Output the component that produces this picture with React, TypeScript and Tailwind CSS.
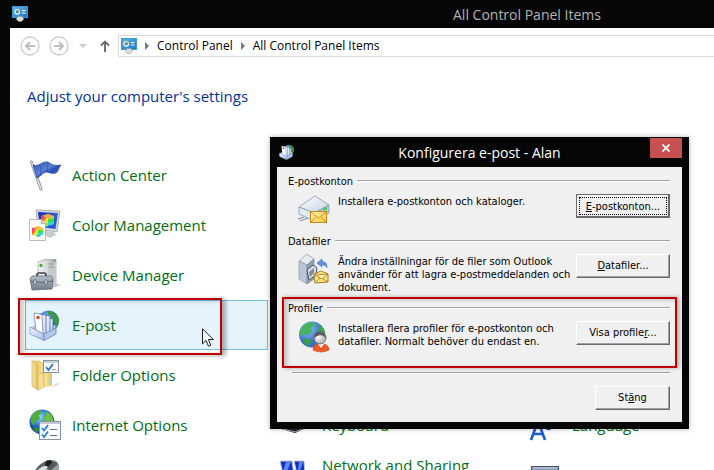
import type { ReactNode } from "react";

function MonitorIcon() {
  return (
    <svg className="h-4 w-4 shrink-0" viewBox="0 0 16 16" aria-hidden="true">
      <defs>
        <linearGradient id="mon" x1="0" y1="0" x2="1" y2="1">
          <stop offset="0" stopColor="#63b4ea" />
          <stop offset="1" stopColor="#1c78c0" />
        </linearGradient>
      </defs>
      <rect x="0.5" y="0.5" width="15" height="11" fill="url(#mon)" stroke="#3d97d3" />
      <circle cx="5.3" cy="5.8" r="2.3" fill="#2f8bd0" stroke="#fff" strokeWidth="1.1" />
      <path d="M5.5 5.6V3.2A2.5 2.5 0 0 1 7.9 5.6Z" fill="#f5a21d" />
      <path d="M10 4.5h3.5M10 7h3.5" stroke="#fff" strokeWidth="1.1" />
      <path d="M6 10.500h4l1.8 2.500-2.300 2.500h-3l-2.300-2.500Z" fill="#d9dcde" stroke="#8b9093" strokeWidth=".5" />
    </svg>
  );
}

function FlagIcon() {
  return (
    <svg viewBox="0 0 32 32" className="h-8 w-8" aria-hidden="true">
      <defs>
        <linearGradient id="flag" x1="0" y1="0" x2="1" y2="1">
          <stop offset="0" stopColor="#2c4fae" />
          <stop offset=".45" stopColor="#5b83d8" />
          <stop offset=".6" stopColor="#2a4fb5" />
          <stop offset="1" stopColor="#5c8ae0" />
        </linearGradient>
      </defs>
      <path d="M2.5 3 12 30" stroke="#8d9296" strokeWidth="3" strokeLinecap="round" />
      <path d="M2.5 3 12 30" stroke="#e8eaec" strokeWidth="1.2" strokeLinecap="round" />
      <path d="M4 6c6 2 9-4 15-3 4 3 7 4 13 3-3 3-2 6-5 8-4 1-5 0-9-1-4 0-6 4-10 6Z" fill="url(#flag)" stroke="#223f94" strokeWidth=".7" />
      <path d="M19 4c-1 4 1 5-2 9M11 6c2 5 0 7 1 11" stroke="#1d3a92" strokeWidth=".8" fill="none" opacity=".6" />
    </svg>
  );
}

function Cube({ x, y, s }: { x: number; y: number; s: number }) {
  return (
    <g transform={`translate(${x} ${y}) scale(${s})`}>
      <path d="M0 2 7 0l6 2-6 2Z" fill="#ffb13d" />
      <path d="M0 2 7 4v9L0 10Z" fill="url(#rain1)" />
      <path d="M13 2 7 4v9l6-3Z" fill="url(#rain2)" />
    </g>
  );
}

function ColorIcon() {
  return (
    <svg viewBox="0 0 32 32" className="h-8 w-8" aria-hidden="true">
      <defs>
        <linearGradient id="rain1" x1="0" y1="0" x2="1" y2="1">
          <stop offset="0" stopColor="#ff2bd0" />
          <stop offset=".3" stopColor="#ff4b36" />
          <stop offset=".6" stopColor="#fff23a" />
          <stop offset="1" stopColor="#38e64a" />
        </linearGradient>
        <linearGradient id="rain2" x1="0" y1="0" x2="0" y2="1">
          <stop offset="0" stopColor="#ffe339" />
          <stop offset=".4" stopColor="#35df3b" />
          <stop offset=".75" stopColor="#28dff0" />
          <stop offset="1" stopColor="#2a59ef" />
        </linearGradient>
        <linearGradient id="scr" x1="0" y1="0" x2="1" y2="0">
          <stop offset="0" stopColor="#1b2fae" />
          <stop offset="1" stopColor="#2f62dc" />
        </linearGradient>
      </defs>
      <path d="m7 1 24 1-3 21-19-3Z" fill="#d7dade" stroke="#9a9fa5" strokeWidth=".8" />
      <path d="m9 3 20 1-2.5 16L11 18Z" fill="url(#scr)" />
      <path d="m17 22 8 1 2 3-6 3-6-3Z" fill="#c9cdd1" />
      <Cube x={12} y={5} s={1} />
      <path d="M.5 10.500h12l4 4v17H.5Z" fill="#fafafa" stroke="#a8a8a8" strokeWidth=".8" />
      <path d="M12.500 10.500v4h4" fill="#ddd" stroke="#a8a8a8" strokeWidth=".8" />
      <Cube x={3} y={17} s={0.85} />
    </svg>
  );
}

function DeviceIcon() {
  return (
    <svg viewBox="0 0 32 32" className="h-8 w-8" aria-hidden="true">
      <defs>
        <linearGradient id="tower" x1="0" x2="1">
          <stop offset="0" stopColor="#f4f5f6" />
          <stop offset=".6" stopColor="#cfd3d6" />
          <stop offset="1" stopColor="#8f9599" />
        </linearGradient>
        <linearGradient id="tool" x1="0" y1="0" x2="0" y2="1">
          <stop offset="0" stopColor="#b4bfca" />
          <stop offset="1" stopColor="#6e7b88" />
        </linearGradient>
      </defs>
      <path d="m24 24 8 2-8 3Z" fill="#ccc" />
      <path d="M9 3 16 .5h11V26H9Z" fill="url(#tower)" stroke="#9ba0a4" strokeWidth=".7" />
      <path d="M19 3h8v23h-8Z" fill="#c6cacd" />
      <path d="M20 5h5M20 8h5" stroke="#8c9296" />
      <circle cx="12" cy="6.500" r="1.700" fill="#40b52d" />
      <path d="M8 18v-2q0-2 2-2h5q2 0 2 2v2" fill="none" stroke="#3f464d" strokeWidth="1.700" />
      <path d="m1 20 2-3h19l2 3-1 10-20 1Z" fill="url(#tool)" stroke="#535e68" strokeWidth=".7" />
      <path d="M1 22q11 3 23 0" fill="none" stroke="#5c6771" />
      <rect x="5" y="21" width="2" height="4" fill="#e9ecee" stroke="#3f464d" strokeWidth=".5" />
      <rect x="16" y="21" width="2" height="4" fill="#e9ecee" stroke="#3f464d" strokeWidth=".5" />
    </svg>
  );
}

function MailIcon({ small = false }: { small?: boolean }) {
  return (
    <svg viewBox="0 0 32 32" className={small ? "h-4 w-4 shrink-0" : "h-8 w-8"} aria-hidden="true">
      <defs>
        <radialGradient id="mailGlobe" cx=".4" cy=".3">
          <stop offset="0" stopColor="#7ec6f5" />
          <stop offset="1" stopColor="#1c56b5" />
        </radialGradient>
        <linearGradient id="tray" x1="0" y1="0" x2="1" y2="1">
          <stop offset="0" stopColor="#f4f8ff" />
          <stop offset="1" stopColor="#a3b9e2" />
        </linearGradient>
        <linearGradient id="letter" x1="0" y1="0" x2="1" y2="1">
          <stop offset="0" stopColor="#fff" />
          <stop offset="1" stopColor="#c4d4f0" />
        </linearGradient>
      </defs>
      <circle cx="19.500" cy="12" r="10.500" fill="url(#mailGlobe)" />
      <path d="M19 2q9 0 11 9-1 7-5 10l1-7-4-3 2-4-5-2Z" fill="#3d9a3c" />
      <path d="m1 19 5-3v-2l20 2 1 5-12 7Z" fill="#b9caea" />
      <path d="m19 9 5 1v13l-5 2Z" fill="url(#letter)" stroke="#4a68a6" strokeWidth=".8" />
      <path d="m15 6 6 1v18l-6-2Z" fill="url(#letter)" stroke="#4a68a6" strokeWidth=".8" />
      <path d="m11 5 6 1v20l-6-3Z" fill="url(#letter)" stroke="#4a68a6" strokeWidth=".8" />
      <path d="m5 4 8 1.500 1 19-7-3Z" fill="#fff" stroke="#6d85b8" strokeWidth=".8" />
      <rect x="7.500" y="7" width="3" height="3" fill="#ef3b20" />
      <path d="m1 18 14 7v6.500L1 25Z" fill="url(#tray)" stroke="#7d95c6" strokeWidth=".8" />
      <path d="m15 25 12-6v6l-12 6.500Z" fill="#b4c7ea" stroke="#6a84ba" strokeWidth=".8" />
    </svg>
  );
}

function FolderIcon() {
  return (
    <svg viewBox="0 0 32 32" className="h-8 w-8" aria-hidden="true">
      <defs>
        <linearGradient id="fold" x1="0" x2="1">
          <stop offset="0" stopColor="#f9e8a4" />
          <stop offset="1" stopColor="#e2bd57" />
        </linearGradient>
      </defs>
      <path d="m22 27 9-4-2 3-10 3Z" fill="#ddd" />
      <path d="M3 2h8l1 2h8v23H9Z" fill="#f0d785" stroke="#d3b35c" strokeWidth=".7" />
      <path d="m3 2 6 3v26l-6-4Z" fill="url(#fold)" stroke="#cfae54" strokeWidth=".7" />
      <path d="m9 15 5-1 1 14-6 3Z" fill="#f7df91" stroke="#cfae54" strokeWidth=".6" />
      <path d="m16 16 7-2v12l-7 2Z" fill="url(#fold)" />
      <path d="M22 19v6" stroke="#a9d4f0" strokeWidth="1.500" />
      <rect x="14.500" y="1.500" width="15" height="12" fill="#fbfcfd" stroke="#8794a2" />
      <path d="M15 3h14" stroke="#b7c2cd" strokeWidth="1.500" />
      <path d="m17 8 2.500 3L24 5" fill="none" stroke="#2a75c6" strokeWidth="1.800" />
      <path d="M23 10.500h4" stroke="#9aa3ad" />
    </svg>
  );
}

function InternetIcon() {
  return (
    <svg viewBox="0 0 32 32" className="h-8 w-8" aria-hidden="true">
      <defs>
        <radialGradient id="netGlobe" cx=".4" cy=".3">
          <stop offset="0" stopColor="#9ce0ff" />
          <stop offset=".6" stopColor="#2a83d8" />
          <stop offset="1" stopColor="#134da4" />
        </radialGradient>
      </defs>
      <circle cx="13" cy="13" r="12.500" fill="url(#netGlobe)" />
      <path d="M2 8q3-6 9-7l2 3-3 2 1 4-5 3-1 4Q1 14 2 8Z" fill="#52ad3a" />
      <path d="m16 2 6 3q3 4 3 9l-5-2-4 1-2-5 3-2Z" fill="#6cbe44" />
      <path d="m4 18 6 1-1 5q-4-2-5-6Z" fill="#348f31" />
      <rect x="10.500" y="12.500" width="21" height="18" fill="#fcfcfd" stroke="#8a93a0" />
      <path d="M11 14h20" stroke="#c3cad2" strokeWidth="2" />
      <path d="m13 19 2 2.500L19 16M13 25.500l2 2.500 4-5.500" fill="none" stroke="#2385cf" strokeWidth="1.800" />
      <path d="M21 20.500h7M21 26.500h7" stroke="#69728a" strokeWidth="1.200" />
    </svg>
  );
}

function MouseIcon() {
  return (
    <svg viewBox="0 0 32 32" className="h-8 w-8" aria-hidden="true">
      <path d="M6 12q4-8 14-11 6-1 9 3 3 5-1 11-8 12-18 12-7-4-4-15Z" fill="#9b9ea2" />
      <path d="M6 12Q10 4 20 1l-4 6-9 5Z" fill="#5e6165" />
      <path d="m17 2 4-1 3 2-4 5-4-1Z" fill="#1d1e20" />
      <path d="M9 11q6-6 10-3l-6 6-6 3Z" fill="#e1e3e5" />
      <path d="m25 2 4 3-8 7-3-3Z" fill="#54575b" />
    </svg>
  );
}

function KeyboardIcon() {
  return (
    <svg viewBox="0 0 32 32" className="h-8 w-8" aria-hidden="true">
      <path d="m-1 17 16-9 12 8-11 8Z" fill="#3a3f48" />
      <path d="m-1 17 16 4 12-5v3l-11 5-17-5Z" fill="#1b1f26" />
      <path d="m1 19 15 4 11-5" fill="none" stroke="#b4bac2" />
    </svg>
  );
}

function NetworkIcon() {
  return (
    <svg viewBox="0 0 32 32" className="h-8 w-8" aria-hidden="true">
      <path d="M1 2h12l2 13H4ZM15 2h10l1 13H18Z" fill="#1331c9" stroke="#c5cbd6" />
      <path d="M7 3h5l-4 9H4ZM20 3h4l-3 9h-2Z" fill="#5a88ee" />
    </svg>
  );
}

function LanguageIcon() {
  return (
    <svg viewBox="0 0 32 32" className="h-8 w-8 overflow-visible" aria-hidden="true">
      <circle cx="12" cy="10" r="10" fill="#78b6e0" />
      <path d="m2 31 7-19 7 19M5 25h8" fill="none" stroke="#1c5bd2" strokeWidth="2.600" />
      <path d="M17 19q6 4 5-6" fill="none" stroke="#1c4bc2" strokeWidth="2.200" />
    </svg>
  );
}

function TrayIcon() {
  return (
    <svg viewBox="0 0 32 32" className="h-8 w-8" aria-hidden="true">
      <rect x="2.500" y="7.500" width="27" height="20" fill="#8a9cb8" stroke="#46556e" />
      <path d="M4 9h24" stroke="#c9d4e4" />
    </svg>
  );
}

function AccountIcon() {
  return (
    <svg viewBox="0 0 32 32" className="h-8 w-8" aria-hidden="true">
      <defs>
        <linearGradient id="drv" x1="0" y1="0" x2="1" y2="1">
          <stop offset="0" stopColor="#fff" />
          <stop offset="1" stopColor="#c6d2e4" />
        </linearGradient>
        <linearGradient id="env" x1="0" y1="0" x2="1" y2="1">
          <stop offset="0" stopColor="#fff4b8" />
          <stop offset="1" stopColor="#f7c63a" />
        </linearGradient>
      </defs>
      <path d="m0 25 6-2M2 27l8-3" stroke="#8495ad" strokeWidth="1.200" />
      <path d="M1 13 17 2l14 9-15 8Z" fill="url(#drv)" stroke="#8497b4" strokeWidth=".8" />
      <path d="m1 13 15 6v8L1 20Z" fill="#e4ebf5" stroke="#8497b4" strokeWidth=".8" />
      <path d="m16 19 15-8v8l-15 8Z" fill="#b9c7dc" stroke="#8497b4" strokeWidth=".8" />
      <path d="m25 15 4-2v2l-4 2Z" fill="#27d433" />
      <rect x="12.500" y="17.500" width="16" height="11" fill="url(#env)" stroke="#c58b18" />
      <path d="m13 18 7.500 6 7.500-6M13 28l5-5M28 28l-5-5" fill="none" stroke="#c58b18" strokeWidth=".9" />
    </svg>
  );
}

function DataIcon() {
  return (
    <svg viewBox="0 0 32 32" className="h-8 w-8" aria-hidden="true">
      <path d="m1 7 8-7 7 5-7 6Z" fill="#e6ebf3" stroke="#8490a6" strokeWidth=".7" />
      <path d="m1 7 8 4v19l-8-5Z" fill="#bcc6d6" stroke="#8c98ad" strokeWidth=".7" />
      <path d="m9 11 7-6v20l-7 5Z" fill="#909db3" stroke="#7d899e" strokeWidth=".7" />
      <path d="m9 16 6-5 4 3-1 7-7 5Z" fill="#d5dce8" stroke="#48546b" />
      <path d="m11 18 5-4v5l-4 4Z" fill="#7e8ba2" />
      <path d="m19 9 5-4v2.500q5 0 5 6-2-3-5-3V13Z" fill="#5b93e5" stroke="#356bb9" strokeWidth=".6" />
      <path d="m16 20 7-3 7 3v8l-13 1Z" fill="#fbe68c" stroke="#af7d16" />
      <path d="m17 21 13-1-6 5Zm0 8 5-5m8 4-5-3" fill="#fff5bb" stroke="#af7d16" strokeWidth=".9" />
    </svg>
  );
}

function ProfileIcon() {
  return (
    <svg viewBox="0 0 32 32" className="h-8 w-8" aria-hidden="true">
      <defs>
        <radialGradient id="profGlobe" cx=".35" cy=".3">
          <stop offset="0" stopColor="#8fc4fb" />
          <stop offset="1" stopColor="#3a6fc8" />
        </radialGradient>
        <radialGradient id="head" cx=".35" cy=".4">
          <stop offset="0" stopColor="#fff" />
          <stop offset="1" stopColor="#bdbdbd" />
        </radialGradient>
      </defs>
      <circle cx="14" cy="13.500" r="13" fill="url(#profGlobe)" />
      <path d="M3 7q4-6 11-6l3 3-4 3 1 4-4 3-5-1-3 2q-1-4 1-8Z" fill="#45b35f" />
      <path d="m19 2 6 5q3 4 2 8l-4-1-4-4 2-3Z" fill="#3aa653" />
      <path d="m6 17 7 2-1 5-3 1-3-4Z" fill="#37a03c" />
      <path d="M15 29q0-5 4-6l4 2 4-2q4 2 4 6-8 4-16 0Z" fill="#ee5a2a" stroke="#c9411a" strokeWidth=".6" />
      <path d="m20 23 3 4 3-4Z" fill="#fff" />
      <circle cx="22" cy="17" r="6" fill="url(#head)" stroke="#666" strokeWidth=".9" />
      <path d="M16 17q0-7 6-6.500 6 .5 6 6.500-3-3-6-3-3 1-6 3Z" fill="#5a5d61" />
    </svg>
  );
}

type Item = { label: string; icon: ReactNode; cell: string; active?: boolean };

const items: Item[] = [
  { label: "Action Center", icon: <FlagIcon />, cell: "col-start-1 row-start-1" },
  { label: "Color Management", icon: <ColorIcon />, cell: "col-start-1 row-start-2" },
  { label: "Device Manager", icon: <DeviceIcon />, cell: "col-start-1 row-start-3" },
  { label: "E-post", icon: <MailIcon />, cell: "col-start-1 row-start-4", active: true },
  { label: "Folder Options", icon: <FolderIcon />, cell: "col-start-1 row-start-5" },
  { label: "Internet Options", icon: <InternetIcon />, cell: "col-start-1 row-start-6" },
  { label: "Keyboard", icon: <KeyboardIcon />, cell: "col-start-2 row-start-6" },
  { label: "Language", icon: <LanguageIcon />, cell: "col-start-3 row-start-6" },
  { label: "Mouse", icon: <MouseIcon />, cell: "col-start-1 row-start-7" },
  { label: "Network and Sharing Center", icon: <NetworkIcon />, cell: "col-start-2 row-start-7" },
  { label: "Notification Area", icon: <TrayIcon />, cell: "col-start-3 row-start-7" },
];

const raised =
  "h-6 border border-t-white border-l-white border-r-[#696969] border-b-[#696969] bg-[#f0f0f0] shadow-[inset_-1px_-1px_0_#a0a0a0] text-center leading-4";

function Group({ title, icon, text, button, height }: { title: string; icon: ReactNode; text: string; button: ReactNode; height: string }) {
  return (
    <section className={height}>
      <div className="flex h-[14px] items-center gap-1">
        <h2>{title}</h2>
        <span className="h-[2px] flex-1 border-t border-t-[#a0a0a0] border-b border-b-white" />
      </div>
      <div className="flex items-start pt-[6px] pl-[10px]">
        <div className="w-10 shrink-0">{icon}</div>
        <p className="flex-1 pt-px pr-1">{text}</p>
        {button}
      </div>
    </section>
  );
}

function Dialog() {
  return (
    <div
      role="dialog"
      aria-label="Konfigurera e-post - Alan"
      className="absolute top-[137px] left-[270px] w-[419px] bg-[#060606] px-[7px] pb-[7px] shadow-[0_0_5px_rgba(0,0,0,0.3)]"
    >
      <div className="grid h-[30px] grid-cols-[32px_1fr_32px] items-center">
        <span className="pl-[2px]">
          <MailIcon small />
        </span>
        <h1 className="text-center font-['Open_Sans',sans-serif] text-[14px] text-white">Konfigurera e-post - Alan</h1>
        <button type="button" aria-label="Stäng fönstret" className="mb-2 flex h-5 items-center justify-center bg-[#c75050]">
          <svg viewBox="0 0 8 8" className="h-2 w-2" aria-hidden="true">
            <path d="m.5.500 7 7m0-7-7 7" stroke="#fff" strokeWidth="1.700" />
          </svg>
        </button>
      </div>
      <div className="relative bg-[#f0f0f0] pt-[7px] pr-3 pb-3 pl-[11px] font-['DejaVu_Sans_Condensed','DejaVu_Sans',sans-serif] text-[11px] leading-[13px] text-black">
        <Group
          title="E-postkonton"
          height="h-[60px]"
          icon={<AccountIcon />}
          text="Installera e-postkonton och kataloger."
          button={
            <button type="button" className="h-6 w-[94px] border border-[#696969] bg-[#f0f0f0] p-[2px] shadow-[inset_-1px_-1px_0_#696969,inset_1px_1px_0_#fff]">
              <span className="flex h-full items-center justify-center border border-dotted border-black whitespace-nowrap">
                <u>E</u>-postkonton...
              </span>
            </button>
          }
        />
        <Group
          title="Datafiler"
          height="h-[67px]"
          icon={<DataIcon />}
          text="Ändra inställningar för de filer som Outlook använder för att lagra e-postmeddelanden och dokument."
          button={
            <button type="button" className={`${raised} w-[94px]`}>
              <u>D</u>atafiler...
            </button>
          }
        />
        <Group
          title="Profiler"
          height="h-[64px]"
          icon={<ProfileIcon />}
          text="Installera flera profiler för e-postkonton och datafiler. Normalt behöver du endast en."
          button={
            <button type="button" className={`${raised} w-[94px]`}>
              Visa profile<u>r</u>...
            </button>
          }
        />
        <div className="mt-[7px] ml-1 h-[2px] border-t border-t-[#a0a0a0] border-b border-b-white" />
        <div className="flex justify-end pt-3">
          <button type="button" className={`${raised} w-[75px]`}>
            St<u>ä</u>ng
          </button>
        </div>
        <div className="pointer-events-none absolute top-[130px] right-[5px] left-[5px] h-[71px] border-2 border-[#c00000] shadow-[2px_0_4px_rgba(0,0,0,0.3),inset_3px_1px_4px_rgba(0,0,0,0.2)]" />
      </div>
    </div>
  );
}

function Crumb({ children }: { children: string }) {
  return (
    <>
      <svg viewBox="0 0 4 8" className="h-2 w-1 shrink-0" aria-hidden="true">
        <path d="M0 0v8l4-4Z" fill="#777" />
      </svg>
      <a href="#" className="whitespace-nowrap">
        {children}
      </a>
    </>
  );
}

export default function App() {
  return (
    <div className="relative flex h-screen flex-col overflow-hidden bg-[#060606] pl-[10px] font-['Open_Sans',sans-serif]">
      <header className="grid h-7 shrink-0 grid-cols-[32px_1fr] items-center pl-[2px]">
        <MonitorIcon />
        <h1 className="pl-[409px] text-[14px] whitespace-nowrap text-[#b4b4b4]">All Control Panel Items</h1>
      </header>
      <main className="flex-1 bg-white">
        <nav className="flex h-[36px] items-center pl-[10px]" aria-label="Address">
          <button type="button" aria-label="Back" className="mr-[9px]">
            <svg viewBox="0 0 20 20" className="h-5 w-5" fill="none" aria-hidden="true">
              <circle cx="10" cy="10" r="9" stroke="#cbcbcb" strokeWidth="1.300" />
              <path d="M15 10H6m4-4-4 4 4 4" stroke="#bdbdbd" strokeWidth="2" />
            </svg>
          </button>
          <button type="button" aria-label="Forward">
            <svg viewBox="0 0 20 20" className="h-5 w-5" fill="none" aria-hidden="true">
              <circle cx="10" cy="10" r="9" stroke="#cbcbcb" strokeWidth="1.300" />
              <path d="M5 10h9m-4-4 4 4-4 4" stroke="#bdbdbd" strokeWidth="2" />
            </svg>
          </button>
          <button type="button" aria-label="Recent locations" className="ml-[10px]">
            <svg viewBox="0 0 8 4" className="h-1 w-2" aria-hidden="true">
              <path d="M0 0h8L4 4Z" fill="#c9c9c9" />
            </svg>
          </button>
          <button type="button" aria-label="Up" className="mr-2 ml-[13px]">
            <svg viewBox="0 0 10 12" className="h-3 w-[10px]" fill="none" aria-hidden="true">
              <path d="M5 12V2M1 5.500l4-4 4 4" stroke="#6b6b6b" strokeWidth="1.900" />
            </svg>
          </button>
          <div className="flex h-[22px] flex-1 items-center gap-2 border border-r-0 border-[#d9d9d9] pl-[2px] text-[12px] text-black">
            <MonitorIcon />
            <Crumb>Control Panel</Crumb>
            <Crumb>All Control Panel Items</Crumb>
          </div>
        </nav>
        <h2 className="h-[86px] pt-5 pl-[17px] text-[15px] leading-6 text-[#003399]">Adjust your computer's settings</h2>
        <ul className="ml-[15px] grid auto-rows-[50px] grid-cols-[243px_243px_243px] gap-x-[7px]">
          {items.map((item) => (
            <li key={item.label} className={`relative ${item.cell}`}>
              <a
                href="#"
                className={`flex h-[50px] items-center gap-[11px] border pl-[3px] text-[15px] leading-5 text-[#006e12] ${
                  item.active ? "border-[#70c0e7] bg-[#e5f3fb]" : "border-transparent"
                }`}
              >
                <span className="shrink-0">{item.icon}</span>
                <span className="max-w-40">{item.label}</span>
              </a>
              {item.active && (
                <>
                  <div className="pointer-events-none absolute top-[-2px] left-[-7px] h-[57px] w-[204px] border-2 border-[#c00000] shadow-[4px_1px_4px_rgba(0,0,0,0.3),inset_4px_1px_4px_rgba(0,0,0,0.2)]" />
                  <svg viewBox="0 0 12 19" className="pointer-events-none absolute top-7 left-[177px] h-[19px] w-3" aria-hidden="true">
                    <path d="M.5.800v15l3.500-3.300 2.500 5.700 2.300-1L6.400 11.500h5Z" fill="#fff" stroke="#1a1a2e" />
                  </svg>
                </>
              )}
            </li>
          ))}
        </ul>
      </main>
      <Dialog />
    </div>
  );
}
